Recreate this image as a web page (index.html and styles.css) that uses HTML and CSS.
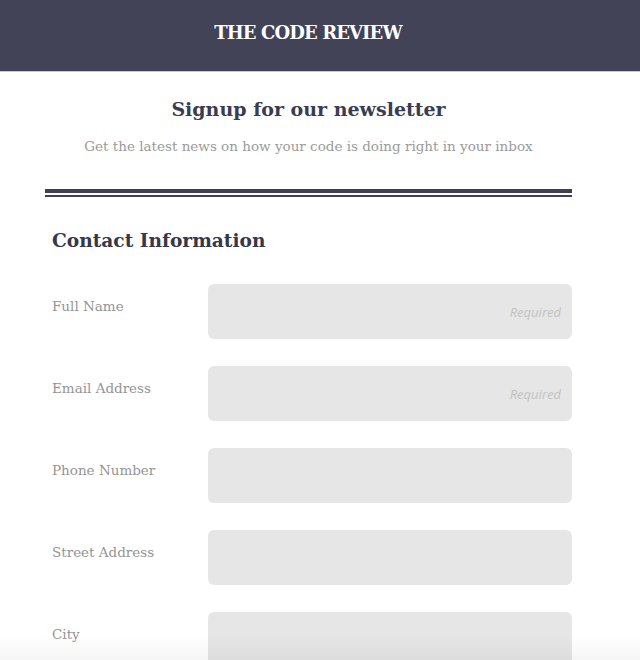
FILE: index.html
```html
<!DOCTYPE html>
<html lang="en">
<head>
<meta charset="utf-8">
<title>The Code Review</title>
<link rel="stylesheet" href="styles.css">
</head>
<body>
<header class="site-header">
  <h1 class="brand">THE CODE REVIEW</h1>
</header>
<main class="page">
  <section class="intro">
    <h2 class="intro-title">Signup for our newsletter</h2>
    <p class="intro-sub">Get the latest news on how your code is doing right in your inbox</p>
  </section>
  <div class="divider"></div>
  <form class="form">
    <h3 class="form-title">Contact Information</h3>
    <div class="row">
      <label class="label" for="f1">Full Name</label>
      <input class="field" id="f1" type="text" placeholder="Required">
    </div>
    <div class="row">
      <label class="label" for="f2">Email Address</label>
      <input class="field" id="f2" type="email" placeholder="Required">
    </div>
    <div class="row">
      <label class="label" for="f3">Phone Number</label>
      <input class="field" id="f3" type="tel">
    </div>
    <div class="row">
      <label class="label" for="f4">Street Address</label>
      <input class="field" id="f4" type="text">
    </div>
    <div class="row">
      <label class="label" for="f5">City</label>
      <input class="field" id="f5" type="text">
    </div>
  </form>
</main>
<div class="fade"></div>
</body>
</html>
```
FILE: styles.css
```css
* { box-sizing: border-box; }
html, body { margin: 0; padding: 0; background: #fff; overflow: hidden; }
body { font-family: "DejaVu Serif", "Liberation Serif", serif; color: #3a3c52; }

.site-header {
  background: #424357;
  height: 72px;
  border-bottom: 1px solid #c9c9d0;
  display: flex;
  align-items: center;
  justify-content: center;
  padding-right: 24px;
  padding-bottom: 6px;
}
.brand {
  margin: 0;
  color: #fff;
  font-size: 18px;
  font-weight: bold;
  letter-spacing: -0.9px;
}

.page {
  width: 616px;
  padding: 0 44px 0 45px;
}
.intro { text-align: center; padding-top: 23px; }
.intro-title {
  margin: 0;
  font-size: 19px;
  font-weight: bold;
  color: #3a3c52;
  line-height: 28px;
}
.intro-sub {
  margin: 13px 0 0;
  font-size: 13.5px;
  color: #9a9a9a;
  line-height: 20px;
}
.divider {
  margin-top: 33px;
  height: 8px;
  border-top: 4px solid #3e4055;
  border-bottom: 2px solid #3e4055;
}

.form { padding: 0 0 0 7px; }
.form-title {
  margin: 31px 0 0;
  font-size: 18.6px;
  font-weight: bold;
  color: #35374b;
  line-height: 26px;
}
.row {
  display: flex;
  align-items: flex-start;
  margin-top: 30px;
}
.row + .row { margin-top: 27px; }
.label {
  width: 156px;
  flex: none;
  padding-top: 12px;
  font-size: 13.5px;
  color: #949494;
  line-height: 20px;
}
.field {
  flex: 1;
  height: 55px;
  border: none;
  border-radius: 6px;
  background: #e6e6e6;
  padding: 0 11px;
  text-align: right;
  font-family: "Open Sans", sans-serif;
  font-style: italic;
  font-size: 13px;
  color: #555;
  outline: none;
}
.field::placeholder { color: #c2c2c2; }

.fade {
  position: fixed;
  left: 0; right: 0; bottom: 0;
  height: 24px;
  background: linear-gradient(to bottom, rgba(0,0,0,0), rgba(0,0,0,0.04));
  pointer-events: none;
}
```
